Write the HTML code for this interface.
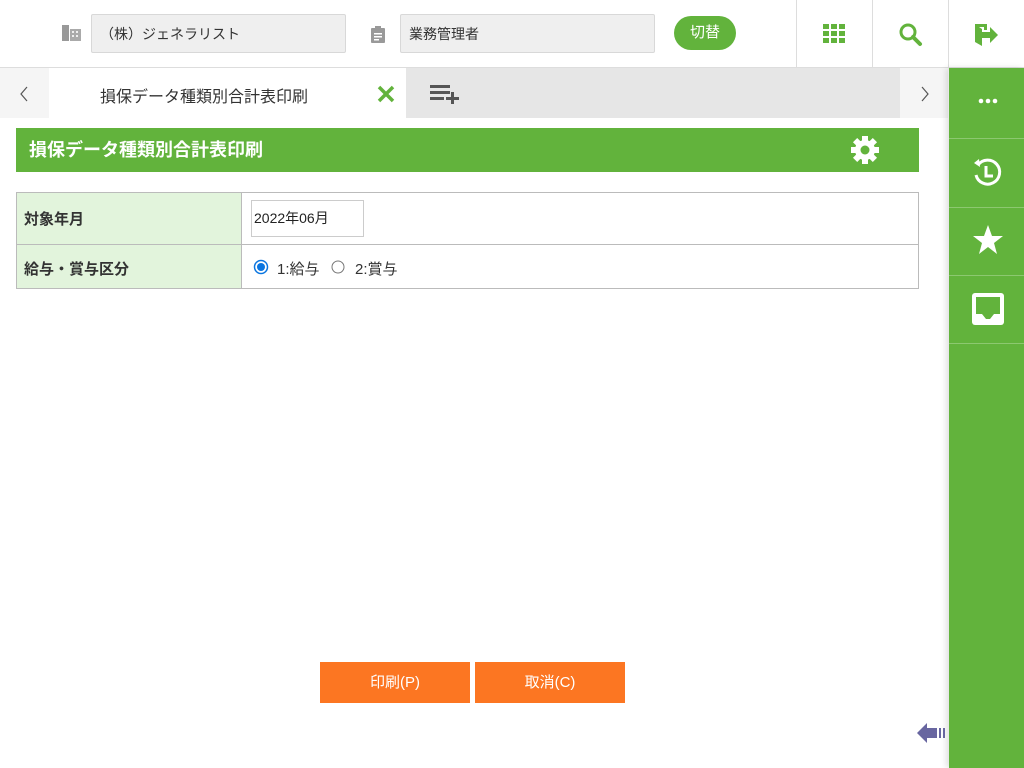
<!DOCTYPE html>
<html><head><meta charset="utf-8"><style>
*{margin:0;padding:0;box-sizing:border-box}
body{width:1024px;height:768px;position:relative;background:#fff;font-family:"Liberation Sans","Noto Sans CJK JP",sans-serif;overflow:hidden;color:#333}
.a{position:absolute}
.box{background:#efefef;border:1px solid #d8d8d8;border-radius:2px;font-size:14px;padding:9px 8px;color:#333}
.vd{width:1px;height:68px;background:#ddd;top:0}
.sb{left:949px;width:75px;background:#62b33c}
.sep{left:949px;width:75px;height:1px;background:#8cc870}
.btn{top:662px;height:41px;width:150px;background:#fc7622;color:#fff;font-size:15px;text-align:center;line-height:41px}
</style></head><body>
<div class="a" style="left:0;top:0;width:1024px;height:68px;border-bottom:1px solid #ddd;box-shadow:0 1px 3px rgba(0,0,0,.1)"></div>
<svg class="a" style="left:62px;top:24px" width="20" height="18"><rect x="0" y="1" width="7" height="16" fill="#999"/><rect x="8" y="5" width="11" height="12" fill="#aaa"/><g fill="#eee"><rect x="10" y="7" width="2" height="2"/><rect x="14" y="7" width="2" height="2"/><rect x="10" y="11" width="2" height="2"/><rect x="14" y="11" width="2" height="2"/></g></svg>
<div class="a box" style="left:91px;top:14px;width:255px;height:39px">（株）ジェネラリスト</div>
<svg class="a" style="left:370px;top:25px" width="16" height="18"><rect x="1" y="3" width="14" height="15" rx="1" fill="#999"/><rect x="5" y="1" width="6" height="4" fill="#999"/><g fill="#fff"><rect x="4" y="8" width="8" height="1.5"/><rect x="4" y="11" width="8" height="1.5"/><rect x="4" y="14" width="5" height="1.5"/></g></svg>
<div class="a box" style="left:400px;top:14px;width:255px;height:39px">業務管理者</div>
<div class="a" style="left:674px;top:16px;width:62px;height:34px;border-radius:17px;background:#62b33c;color:#fff;font-size:15px;text-align:center;line-height:34px">切替</div>
<div class="a vd" style="left:796px"></div><div class="a vd" style="left:872px"></div><div class="a vd" style="left:948px"></div>
<svg class="a" style="left:823px;top:24px" width="22" height="20" fill="#62b33c"><rect x="0" y="0" width="6" height="5"/><rect x="8" y="0" width="6" height="5"/><rect x="16" y="0" width="6" height="5"/><rect x="0" y="7" width="6" height="5"/><rect x="8" y="7" width="6" height="5"/><rect x="16" y="7" width="6" height="5"/><rect x="0" y="14" width="6" height="5"/><rect x="8" y="14" width="6" height="5"/><rect x="16" y="14" width="6" height="5"/></svg>
<svg class="a" style="left:898px;top:22px" width="26" height="26"><circle cx="10" cy="10" r="7" fill="none" stroke="#62b33c" stroke-width="3"/><path d="M15 15 L22 22" stroke="#62b33c" stroke-width="4" stroke-linecap="round"/></svg>
<svg class="a" style="left:973px;top:22px" width="28" height="26" fill="#62b33c"><path d="M2 2 H14 V8 H11 V5 H6 L9 7 V24 L2 20 Z"/><path d="M9 10 H17 V5 L25 13 L17 21 V16 H9 Z"/></svg>
<!-- tabs -->
<div class="a" style="left:0;top:68px;width:49px;height:50px;background:#f5f5f5"></div>
<svg class="a" style="left:19px;top:86px" width="10" height="16"><path d="M8 1 L2 8 L8 15" fill="none" stroke="#555" stroke-width="1.2"/></svg>
<div class="a" style="left:49px;top:68px;width:357px;height:50px;background:#fff"></div>
<div class="a" style="left:100px;top:83px;font-size:16px;color:#333">損保データ種類別合計表印刷</div>
<svg class="a" style="left:377px;top:85px" width="18" height="18"><path d="M2 2 L16 16 M16 2 L2 16" stroke="#62b33c" stroke-width="3.5"/></svg>
<div class="a" style="left:406px;top:68px;width:494px;height:50px;background:#e6e6e6"></div>
<svg class="a" style="left:430px;top:84px" width="30" height="20" fill="#555"><rect x="0" y="1" width="20" height="3"/><rect x="0" y="7" width="20" height="3"/><rect x="0" y="13" width="14" height="3"/><rect x="16" y="13" width="13" height="3"/><rect x="21" y="8" width="3" height="12"/></svg>
<div class="a" style="left:900px;top:68px;width:48px;height:50px;background:#f5f5f5"></div>
<svg class="a" style="left:920px;top:86px" width="10" height="16"><path d="M2 1 L8 8 L2 15" fill="none" stroke="#555" stroke-width="1.2"/></svg>
<!-- sidebar -->
<div class="a sb" style="top:68px;height:700px;box-shadow:-3px 0 6px rgba(0,0,0,.12)"></div>
<div class="a sep" style="top:138px"></div><div class="a sep" style="top:207px"></div><div class="a sep" style="top:275px"></div><div class="a sep" style="top:343px"></div>
<svg class="a" style="left:978px;top:98px" width="20" height="6" fill="#fff"><circle cx="3" cy="3" r="2.3"/><circle cx="10" cy="3" r="2.3"/><circle cx="17" cy="3" r="2.3"/></svg>
<svg class="a" style="left:970px;top:155px" width="36" height="36" fill="none" stroke="#fff" stroke-width="3"><path d="M8 10 A12 12 0 1 1 6 20"/><path d="M4 8 L9 4 L10 12 Z" fill="#fff" stroke="none"/><path d="M16 11 V21 H23"/></svg>
<svg class="a" style="left:972px;top:224px" width="32" height="32"><path d="M16 1 L20 12 L31 12 L22 19 L25 30 L16 23 L7 30 L10 19 L1 12 L12 12 Z" fill="#fff"/></svg>
<svg class="a" style="left:971px;top:292px" width="34" height="34"><rect x="1" y="1" width="32" height="32" rx="3" fill="#fff"/><path d="M5 5 H29 V22 H23 L19 27 H15 L11 22 H5 Z" fill="#62b33c"/></svg>
<!-- title -->
<div class="a" style="left:16px;top:128px;width:903px;height:44px;background:#62b33c;color:#fff;font-weight:bold;font-size:18px;line-height:44px;padding-left:13px">損保データ種類別合計表印刷</div>
<svg class="a" style="left:850px;top:135px" width="30" height="30"><g fill="#fff" transform="translate(15 15)"><circle r="10"/><rect x="-3" y="-14" width="6" height="28"/><rect x="-3" y="-14" width="6" height="28" transform="rotate(45)"/><rect x="-3" y="-14" width="6" height="28" transform="rotate(90)"/><rect x="-3" y="-14" width="6" height="28" transform="rotate(135)"/></g><circle cx="15" cy="15" r="4.5" fill="#62b33c"/></svg>
<!-- table -->
<div class="a" style="left:16px;top:192px;width:903px;height:97px;border:1px solid #bbb"></div>
<div class="a" style="left:17px;top:193px;width:225px;height:95px;background:#e2f4dc;border-right:1px solid #bbb"></div>
<div class="a" style="left:17px;top:244px;width:901px;height:1px;background:#bbb"></div>
<div class="a" style="left:24px;top:208px;font-size:15px;font-weight:bold;color:#333">対象年月</div>
<div class="a" style="left:24px;top:258px;font-size:15px;font-weight:bold;color:#333">給与・賞与区分</div>
<div class="a" style="left:251px;top:200px;width:113px;height:37px;border:1px solid #ccc;font-size:14px;line-height:35px;padding-left:2px;color:#222">2022年06月</div>
<svg class="a" style="left:253px;top:259px" width="16" height="16"><circle cx="8" cy="8" r="6.5" fill="#fff" stroke="#0a75e0" stroke-width="1.5"/><circle cx="8" cy="8" r="4" fill="#0a75e0"/></svg>
<div class="a" style="left:277px;top:258px;font-size:15px;color:#333">1:給与</div>
<svg class="a" style="left:330px;top:259px" width="16" height="16"><circle cx="8" cy="8" r="6" fill="#fff" stroke="#777" stroke-width="1"/></svg>
<div class="a" style="left:355px;top:258px;font-size:15px;color:#333">2:賞与</div>
<!-- buttons -->
<div class="a btn" style="left:320px">印刷(P)</div>
<div class="a btn" style="left:475px">取消(C)</div>
<svg class="a" style="left:917px;top:720px" width="32" height="26"><path d="M0 13 L10 3 V8 H20 V18 H10 V23 Z" fill="#6866a0"/><rect x="22" y="8" width="2" height="10" fill="#6866a0"/><rect x="26" y="8" width="2" height="10" fill="#6866a0"/></svg>
</body></html>
